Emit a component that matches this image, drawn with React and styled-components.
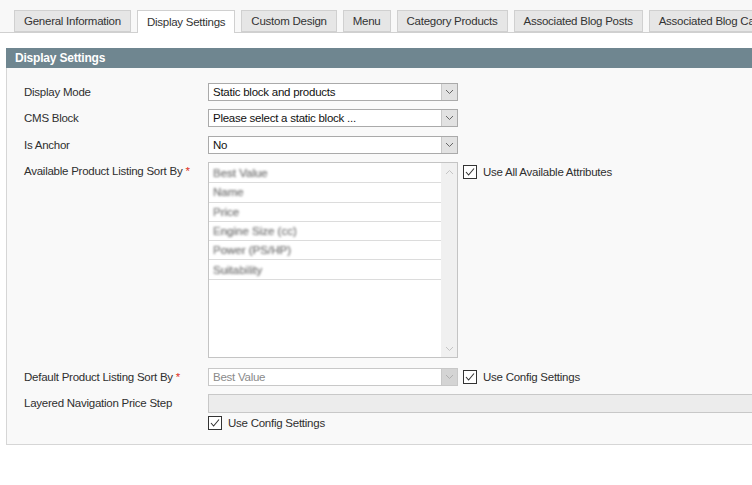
import React from "react";
import styled, { createGlobalStyle } from "styled-components";

const Global = createGlobalStyle`
  html, body { margin: 0; padding: 0; overflow: hidden; background: #fff; }
  body { font-family: "Liberation Sans", Arial, sans-serif; font-size: 11.5px; letter-spacing: -0.25px; color: #2f2f2f; }
  * { box-sizing: border-box; }
`;

const Page = styled.div`
  width: 820px;
`;

const TabBar = styled.div`
  display: flex;
  align-items: flex-end;
  gap: 6px;
  height: 33px;
  padding: 10px 0 0 14px;
  border-bottom: 1px solid #d0d0d0;
  background: #f8f8f8;
`;

const Tab = styled.div`
  height: ${(p) => (p.$active ? "23px" : "22px")};
  margin-bottom: ${(p) => (p.$active ? "-1px" : "0")};
  padding: 0 9px;
  padding-bottom: ${(p) => (p.$active ? "1px" : "0")};
  display: flex;
  align-items: center;
  white-space: nowrap;
  border: 1px solid #d0d0d0;
  border-bottom: ${(p) => (p.$active ? "none" : "1px solid #d0d0d0")};
  background: ${(p) => (p.$active ? "#fff" : "#e6e6e6")};
  color: #333;
`;

const Section = styled.div`
  margin: 15px 0 0 6px;
`;

const SectionHeader = styled.div`
  height: 20px;
  background: #6f8690;
  color: #fff;
  font-weight: bold;
  font-size: 12px;
  letter-spacing: -0.2px;
  padding-left: 9px;
  display: flex;
  align-items: center;
`;

const Panel = styled.div`
  background: #f9f9f9;
  border-left: 1px solid #d6d6d6;
  border-bottom: 1px solid #d6d6d6;
  padding: 15px 0 14px 17px;
  display: grid;
  grid-template-columns: 184px 250px 1fr;
`;

const Label = styled.div`
  grid-column: 1;
  color: #2f2f2f;
  line-height: 18px;
  margin-top: ${(p) => p.$mt || 0}px;
  white-space: nowrap;
`;

const Star = styled.span`
  color: #e0301e;
  margin-left: 3px;
`;

const Field = styled.div`
  grid-column: ${(p) => (p.$span ? "2 / span 2" : "2")};
  margin-top: ${(p) => p.$mt || 0}px;
`;

const Extra = styled.div`
  grid-column: 3;
  margin-top: ${(p) => p.$mt || 0}px;
  padding-left: 5px;
  display: flex;
  align-items: flex-start;
`;

const SelectBox = styled.div`
  height: 18px;
  width: 250px;
  border: 1px solid ${(p) => (p.$disabled ? "#c8c8c8" : "#aaa")};
  background: #fff;
  display: flex;
  align-items: stretch;
`;

const SelectText = styled.div`
  flex: 1;
  padding-left: 4px;
  line-height: 16px;
  color: ${(p) => (p.$disabled ? "#8a8a8a" : "#111")};
  white-space: nowrap;
  overflow: hidden;
`;

const ArrowBtn = styled.div`
  width: 16px;
  background: ${(p) => (p.$disabled ? "#d4d4d4" : "#e2e2e2")};
  border-left: 1px solid #c8c8c8;
  display: flex;
  align-items: center;
  justify-content: center;
`;

const Chevron = ({ up, color = "#666" }) => (
  <svg width="9" height="6" viewBox="0 0 9 6">
    <polyline
      points={up ? "1,5 4.5,1.5 8,5" : "1,1 4.5,4.5 8,1"}
      fill="none"
      stroke={color}
      strokeWidth="1"
    />
  </svg>
);

const Select = ({ value, disabled }) => (
  <SelectBox $disabled={disabled}>
    <SelectText $disabled={disabled}>{value}</SelectText>
    <ArrowBtn $disabled={disabled}>
      <Chevron color={disabled ? "#b0b0b0" : "#666"} />
    </ArrowBtn>
  </SelectBox>
);

const MultiBox = styled.div`
  width: 250px;
  height: 196px;
  border: 1px solid #c4c4c4;
  background: #fff;
  display: flex;
`;

const MultiList = styled.div`
  flex: 1;
  padding-top: 1px;
`;

const MultiItem = styled.div`
  height: 19.3px;
  border-bottom: 1px solid #dcdcdc;
  padding-left: 4px;
  display: flex;
  align-items: center;
`;

const Blurred = styled.span`
  color: #8c8c8c;
  filter: blur(1.1px);
  text-shadow: 0 0 1px #777;
  letter-spacing: 0;
`;

const ScrollBar = styled.div`
  width: 16px;
  background: #f0f0f0;
  display: flex;
  flex-direction: column;
  justify-content: space-between;
  align-items: center;
  padding: 6px 0 5px;
`;

const Input = styled.div`
  height: 19px;
  width: 100%;
  background: #ececec;
  border: 1px solid #c8c8c8;
`;

const CheckRow = styled.label`
  display: flex;
  align-items: center;
  gap: 6px;
  color: #2f2f2f;
  white-space: nowrap;
  margin-top: ${(p) => p.$mt || 0}px;
`;

const Check = () => (
  <svg width="14" height="14" viewBox="0 0 14 14">
    <rect x="0.5" y="0.5" width="13" height="13" fill="#fff" stroke="#333" />
    <polyline points="3,7 5.6,10 11,3.5" fill="none" stroke="#333" strokeWidth="1.1" />
  </svg>
);

const tabs = [
  "General Information",
  "Display Settings",
  "Custom Design",
  "Menu",
  "Category Products",
  "Associated Blog Posts",
  "Associated Blog Categories",
];

const sortItems = ["Best Value", "Name", "Price", "Engine Size (cc)", "Power (PS/HP)", "Suitability"];

export default function App() {
  return (
    <Page>
      <Global />
      <TabBar>
        {tabs.map((t) => (
          <Tab key={t} $active={t === "Display Settings"}>
            {t}
          </Tab>
        ))}
      </TabBar>
      <Section>
        <SectionHeader>Display Settings</SectionHeader>
        <Panel>
          <Label>Display Mode</Label>
          <Field>
            <Select value="Static block and products" />
          </Field>

          <Label $mt={8}>CMS Block</Label>
          <Field $mt={8}>
            <Select value="Please select a static block ..." />
          </Field>

          <Label $mt={9}>Is Anchor</Label>
          <Field $mt={9}>
            <Select value="No" />
          </Field>

          <Label $mt={8}>
            Available Product Listing Sort By<Star>*</Star>
          </Label>
          <Field $mt={8}>
            <MultiBox>
              <MultiList>
                {sortItems.map((s) => (
                  <MultiItem key={s}>
                    <Blurred>{s}</Blurred>
                  </MultiItem>
                ))}
              </MultiList>
              <ScrollBar>
                <Chevron up color="#c4c4c4" />
                <Chevron color="#c4c4c4" />
              </ScrollBar>
            </MultiBox>
          </Field>
          <Extra $mt={11}>
            <CheckRow>
              <Check />
              Use All Available Attributes
            </CheckRow>
          </Extra>

          <Label $mt={10}>
            Default Product Listing Sort By<Star>*</Star>
          </Label>
          <Field $mt={10}>
            <Select value="Best Value" disabled />
          </Field>
          <Extra $mt={10}>
            <CheckRow $mt={2}>
              <Check />
              Use Config Settings
            </CheckRow>
          </Extra>

          <Label $mt={8}>Layered Navigation Price Step</Label>
          <Field $mt={8} $span>
            <Input />
          </Field>

          <Field $mt={3}>
            <CheckRow>
              <Check />
              Use Config Settings
            </CheckRow>
          </Field>
        </Panel>
      </Section>
    </Page>
  );
}
